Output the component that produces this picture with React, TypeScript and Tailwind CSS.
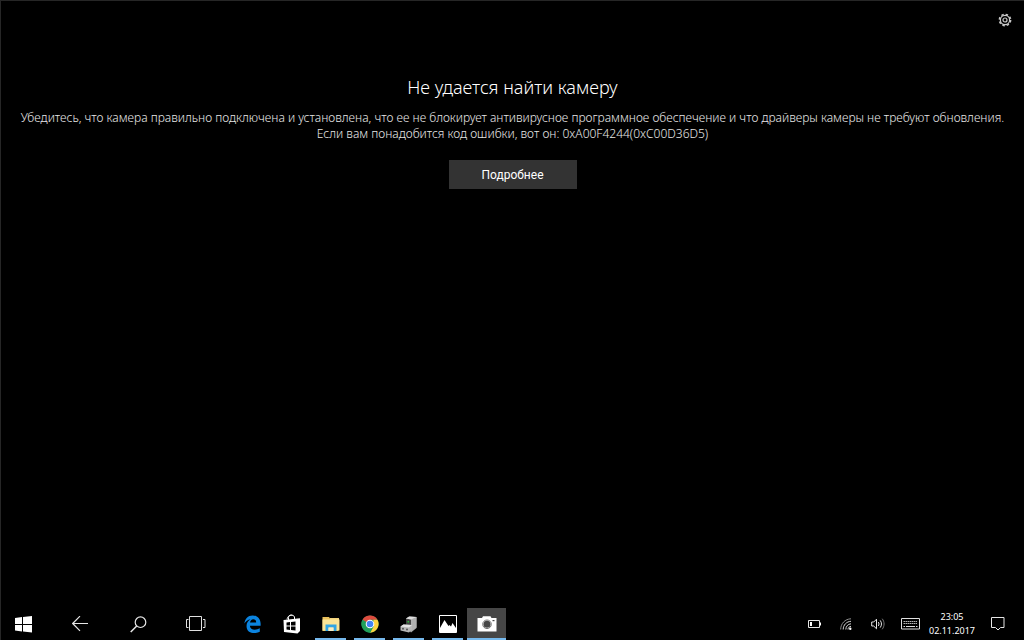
import type { ReactNode } from "react";

const App = () => {
  return (
    <div className="flex min-h-screen flex-col bg-black font-['Noto_Sans','Open_Sans',sans-serif] text-white">
      <div className="flex flex-1 flex-col border-t border-l border-[#262626]">
        <header className="flex justify-end px-3 pt-3">
          <button type="button" aria-label="Параметры">
            <SettingsIcon />
          </button>
        </header>
        <CameraError />
      </div>
      <Taskbar />
    </div>
  );
};

export default App;

const CameraError = () => {
  return (
    <main className="flex flex-col items-center px-2 pt-12 text-center">
      <h1 className="text-[18px] leading-6 font-light">
        Не удается найти камеру
      </h1>
      <p className="mt-[11px] text-[12px] leading-4 font-light text-[#e8e8e8]">
        Убедитесь, что камера правильно подключена и установлена, что ее не
        блокирует антивирусное программное обеспечение и что драйверы камеры не
        требуют обновления.
        <br />
        Если вам понадобится код ошибки, вот он: 0xA00F4244(0xC00D36D5)
      </p>
      <button
        type="button"
        className="mt-[18px] h-[29px] w-32 bg-[#333333] font-['Roboto','Noto_Sans',sans-serif] text-[12px]"
      >
        Подробнее
      </button>
    </main>
  );
};

const apps = [
  { name: "Microsoft Edge", icon: <EdgeIcon />, running: false, active: false },
  { name: "Магазин", icon: <StoreIcon />, running: false, active: false },
  { name: "Проводник", icon: <ExplorerIcon />, running: true, active: false },
  { name: "Google Chrome", icon: <ChromeIcon />, running: true, active: false },
  { name: "Устройство", icon: <DeviceIcon />, running: true, active: false },
  { name: "Фотографии", icon: <PhotosIcon />, running: true, active: false },
  { name: "Камера", icon: <CameraIcon />, running: true, active: true },
];

const Taskbar = () => {
  return (
    <footer className="flex h-8 items-stretch justify-between border-l border-[#262626]">
      <div className="flex">
        <button
          type="button"
          aria-label="Пуск"
          className="mr-1.5 flex w-11 items-center justify-center"
        >
          <StartIcon />
        </button>
        <NavButton label="Назад">
          <BackIcon />
        </NavButton>
        <NavButton label="Поиск">
          <SearchIcon />
        </NavButton>
        <NavButton label="Представление задач">
          <TaskViewIcon />
        </NavButton>
        <div className="ml-2 flex">
          {apps.map((app) => (
            <button
              key={app.name}
              type="button"
              aria-label={app.name}
              className={`relative flex w-[39px] items-center justify-center ${
                app.active ? "bg-[#464646]" : ""
              }`}
            >
              {app.icon}
              {app.running && (
                <span
                  className={`absolute bottom-0 h-[2px] bg-[#76b9ed] ${
                    app.active ? "inset-x-0" : "inset-x-1"
                  }`}
                />
              )}
            </button>
          ))}
        </div>
      </div>

      <div className="flex items-center">
        <button type="button" aria-label="Батарея" className="flex w-8 justify-center">
          <BatteryIcon />
        </button>
        <button type="button" aria-label="Сеть" className="flex w-8 justify-center">
          <WifiIcon />
        </button>
        <button type="button" aria-label="Громкость" className="flex w-8 justify-center">
          <VolumeIcon />
        </button>
        <button type="button" aria-label="Клавиатура" className="flex w-8 justify-center">
          <KeyboardIcon />
        </button>
        <button
          type="button"
          className="flex w-[52px] flex-col items-center text-[9px] leading-[14px]"
        >
          <span>23:05</span>
          <span>02.11.2017</span>
        </button>
        <button
          type="button"
          aria-label="Центр уведомлений"
          className="mr-1.5 flex w-10 justify-center"
        >
          <ActionCenterIcon />
        </button>
      </div>
    </footer>
  );
};

const NavButton = ({ label, children }: { label: string; children: ReactNode }) => {
  return (
    <button
      type="button"
      aria-label={label}
      className="flex w-[58px] items-center justify-center"
    >
      {children}
    </button>
  );
};

function SettingsIcon() {
  return (
    <svg width="14" height="14" viewBox="0 0 14 14" fill="none" stroke="#c8c8c8">
      <circle cx="7" cy="7" r="5.600" strokeWidth="1.600" strokeDasharray="2.400 2" />
      <circle cx="7" cy="7" r="4.600" strokeWidth="1.200" />
      <circle cx="7" cy="7" r="2" strokeWidth="1.200" />
    </svg>
  );
}

function StartIcon() {
  return (
    <svg width="17" height="17" viewBox="0 0 17 17" fill="#fff">
      <path d="M0 2 7 1V8H0zM8 .900 17 0v8H8zM0 9h7v6.500L0 14.500zM8 9h9v7.500L8 15.500z" />
    </svg>
  );
}

function BackIcon() {
  return (
    <svg width="16" height="16" viewBox="0 0 16 16" fill="none" stroke="#e6e6e6" strokeWidth="1.200">
      <path d="M16 7.500H1M8 .200.700 7.500 8 14.800" />
    </svg>
  );
}

function SearchIcon() {
  return (
    <svg width="17" height="17" viewBox="0 0 17 17" fill="none" stroke="#e6e6e6" strokeWidth="1.200">
      <circle cx="10.500" cy="6.200" r="5.300" />
      <path d="M6.700 10 .7 16" strokeWidth="1.500" />
    </svg>
  );
}

function TaskViewIcon() {
  return (
    <svg width="20" height="16" viewBox="0 0 20 16" fill="none" stroke="#e0e0e0">
      <path d="M3.500.5h12v14h-12zM2.500 3.500H.5v8h2M17 3.500h2v8h-2" />
    </svg>
  );
}

function EdgeIcon() {
  return (
    <svg width="17" height="18" viewBox="0 0 24 24" preserveAspectRatio="none" fill="#0b84e0">
      <path d="M.5 11.200C1.300 5.200 5.500.500 12.200.500c7 0 11.300 4.800 11.300 11.300v2.500H8.300c.2 3.700 3.200 5.300 6.900 5.300 2.600 0 5-.7 7.100-1.900v4.700c-2.300 1.100-5 1.700-8 1.700-6.600 0-10.700-3.700-10.700-9.600 0-4.200 2.200-7.300 5.600-9C5.300 6.200 2.500 8 .500 11.200zM8.500 10h8.700c0-2.700-1.400-4.500-4.100-4.500-2.600 0-4.200 1.900-4.600 4.500z" />
    </svg>
  );
}

function StoreIcon() {
  return (
    <svg width="18" height="20" viewBox="0 0 18 20">
      <path d="M5.500 6V3.500C5.500.5 10.500.2 11.500 3v2.500M4 5.500C4.500 2 7.500.500 9.500 1.500" fill="none" stroke="#fff" strokeWidth="1" />
      <path d="M.5 6 17 4.200V17l-2.500 2.600L1 18z" fill="#fff" />
      <path d="M3.500 8.500 7 8.100v3.400H3.500zM8 8l4.500-.6v4.100H8zM3.500 12.500H7v3.400l-3.500-.4zM8 12.500h4.500v4L8 16z" fill="#000" />
    </svg>
  );
}

function ExplorerIcon() {
  return (
    <svg width="18" height="16" viewBox="0 0 18 16">
      <path d="M.5 1h6.500l1 1.500h8.500V15H.5z" fill="#e9c15c" />
      <path d="M8 2h9v3H8z" fill="#f2d37c" />
      <path d="M.5 3.500h17V14.500H.5z" fill="#fce596" />
      <path d="M3.500 8.500h11V15h-3v-3.500h-5V15h-3z" fill="#31a5e4" />
      <path d="M6.500 11.500h5V15h-5z" fill="#f7edc5" />
    </svg>
  );
}

function ChromeIcon() {
  return (
    <svg width="18" height="18" viewBox="0 0 48 48">
      <circle cx="24" cy="24" r="23" fill="#21a05a" />
      <path d="M24 24 4.100 12.500A23 23 0 0 1 43.900 12.500H24z" fill="#dd4b3e" />
      <path d="M43.900 12.500A23 23 0 0 1 24 47l10-17.300L33 12.500z" fill="#fdd23f" />
      <path d="M4.100 12.500A23 23 0 0 0 24 47l9.500-17-9.500 2-9.500-3z" fill="#21a05a" />
      <circle cx="24" cy="24" r="11.500" fill="#fff" />
      <circle cx="24" cy="24" r="8.800" fill="#4384f3" />
    </svg>
  );
}

function DeviceIcon() {
  return (
    <svg width="18" height="17" viewBox="0 0 18 17">
      <path d="m6 2.500 3-2L16.500 1v11L11 16.500 6 11z" fill="#a5a5a5" />
      <path d="m6 2.500 5 1V10H6z" fill="#444" />
      <path d="m11 3.500 5.500-2.500v10.500L11 15.500z" fill="#b0b0b0" />
      <path d="m6 2.500 3.500-2 7 .5L11 3.500z" fill="#dedede" />
      <path d="M7.500 5h1.500v1.500H7.500z" fill="#2fbb3a" />
      <path d="m.5 10.500 3-2 8.500.5v4.500L9 16.500.5 14.500z" fill="#b8b8b8" />
      <path d="m.5 10.500 3-2L12 9l-3 2.500z" fill="#e4e4e4" />
      <circle cx="3" cy="12.700" r="1" fill="#555" />
      <circle cx="7" cy="13.500" r="1" fill="#555" />
    </svg>
  );
}

function PhotosIcon() {
  return (
    <svg width="18" height="18" viewBox="0 0 18 18">
      <path d="M.5.5h17v17H.5z" fill="#000" stroke="#fff" />
      <path d="M1 13 5.500 5l4 6 1-1 1.500 1.500L13.500 8 17 13v4.500H1z" fill="#fff" />
    </svg>
  );
}

function CameraIcon() {
  return (
    <svg width="20" height="16" viewBox="0 0 20 16">
      <path d="M.5 2H5L6 .3h7.500L14.500 2h5v13.500H.5z" fill="#fff" />
      <circle cx="10" cy="8.300" r="4.300" fill="none" stroke="#777" strokeWidth="1" />
      <circle cx="10" cy="8.300" r="3.500" fill="#464646" />
      <path d="M15.500 4h2v1.200h-2z" fill="#464646" />
    </svg>
  );
}

function BatteryIcon() {
  return (
    <svg width="13" height="8" viewBox="0 0 13 8">
      <path d="M.5.5h11v7H.5z" fill="none" stroke="#e6e6e6" />
      <path d="M2 2h2v4H2zM12 2.500h1v3h-1z" fill="#fff" />
    </svg>
  );
}

function WifiIcon() {
  return (
    <svg width="12" height="12" viewBox="0 0 12 12" fill="none" stroke="#d4d4d4">
      <path d="M.7 11.500C.700 5.500 5 1 11 .8" stroke="#8c8c8c" />
      <path d="M3.200 11.500C3.200 7 6.500 3.500 11 3.300M5.800 11.500c0-3 2.200-5.500 5.200-5.700" />
      <path d="M8 11.500c0-1.700 1.300-3 3-3.200" />
      <circle cx="10.300" cy="10.700" r="1.200" fill="#fff" stroke="none" />
    </svg>
  );
}

function VolumeIcon() {
  return (
    <svg width="14" height="12" viewBox="0 0 14 12" fill="none" stroke="#e6e6e6">
      <path d="M.7 4h2L5.500 1.200v9.600L2.700 8h-2z" />
      <path d="M7.300 4c.9 1.200.9 2.800 0 4M9.200 2.400c1.700 2.200 1.700 5 0 7.200" />
      <path d="M11.200.7c2.500 3.200 2.500 7.400 0 10.600" stroke="#777" />
    </svg>
  );
}

function KeyboardIcon() {
  return (
    <svg width="19" height="12" viewBox="0 0 19 12" fill="none" stroke="#e0e0e0">
      <path d="M.5.5h18v10.500H.5z" />
      <path d="M2.500 3.500h14M2.500 5.500h14" strokeDasharray="1.500 .5" stroke="#b5b5b5" />
      <path d="M2.500 8.500H4M5 8.500h9M15 8.500h1.500" />
    </svg>
  );
}

function ActionCenterIcon() {
  return (
    <svg width="14" height="14" viewBox="0 0 14 14" fill="none" stroke="#e6e6e6">
      <path d="M.5.500h12.500v10H9.500L7 13l-2.500-2.500h-4z" />
    </svg>
  );
}
